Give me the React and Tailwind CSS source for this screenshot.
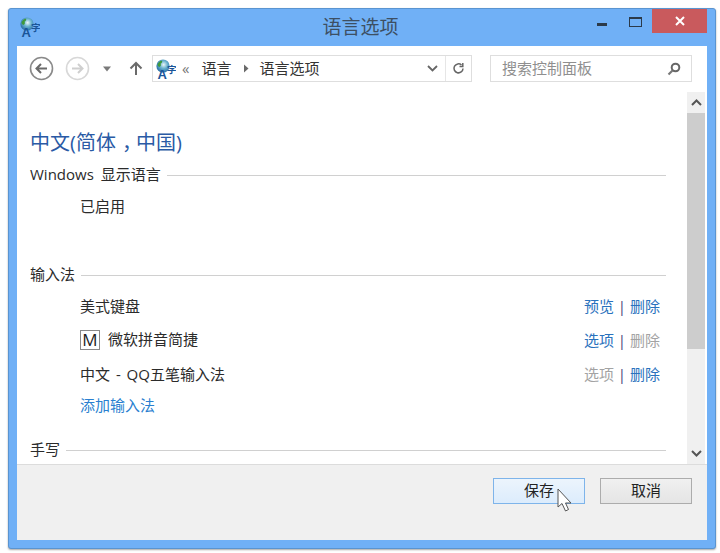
const FONT = '"Open Sans","Noto Sans CJK SC",sans-serif';

function Globe({ x = 0 }) {
  return (
    <svg width="20" height="24" viewBox="0 0 20 24" className="-mb-[4px] shrink-0">
      <defs>
        <radialGradient id={`g${x}`} cx="0.55" cy="0.4" r="0.7">
          <stop offset="0" stopColor="#eef7f8" />
          <stop offset="0.4" stopColor="#6cb4d0" />
          <stop offset="1" stopColor="#12589a" />
        </radialGradient>
      </defs>
      <circle cx="7" cy="7" r="6.6" fill={`url(#g${x})`} />
      <path d="M1.5 5.5c1-2.5 3-4 4.5-3.8 .6 1.4-.4 2.4-1.5 3 .8 1.2 .4 2.4-1 3.2-1.2-.5-2-1.2-2-2.4z" fill="#3f9a3a" />
      <text x="1.5" y="20" fontSize="13" fontWeight="700" fill="#1a5599" style={{ fontFamily: '"Liberation Sans",sans-serif' }}>A</text>
      <text x="11" y="14" fontSize="9.5" fontWeight="700" fill="#1a5599" style={{ fontFamily: '"Noto Sans CJK SC",sans-serif' }}>字</text>
    </svg>
  );
}

function Section({ label, className = "" }) {
  return (
    <div className={`flex h-[18px] items-center gap-[6px] text-[15px] leading-[18px] text-[#2b2b2b] ${className}`}>
      <span className="mb-[2px] whitespace-nowrap [word-spacing:3px]">{label}</span>
      <div className="h-px flex-1 bg-[#d0d0d0]" />
    </div>
  );
}

function Link({ children, off }) {
  return <span className={off ? "text-[#a3a3a3]" : "text-[#2a72bd]"}>{children}</span>;
}

function Row({ children, a, b, aOff, bOff, className = "" }) {
  return (
    <div className={`flex items-center justify-between pl-[50px] pr-[6px] text-[15px] leading-[20px] text-[#2b2b2b] ${className}`}>
      <div className="flex items-center">{children}</div>
      <div className="flex items-center">
        <Link off={aOff}>{a}</Link>
        <span className="w-[16px] text-center text-[#4a3f7a]">|</span>
        <Link off={bOff}>{b}</Link>
      </div>
    </div>
  );
}

export default function App() {
  return (
    <div className="h-[553px] w-[720px] overflow-hidden bg-white pl-2 pt-2" style={{ fontFamily: FONT }}>
      <div className="flex h-[541px] w-[708px] flex-col rounded-[3px] border border-[#5a94d0] bg-[#70b0f6] pb-[8px] pl-[8px] pr-[8px] shadow-[0_1px_2px_rgba(0,0,0,0.35)]">
        {/* title bar */}
        <div className="relative flex h-[37px] shrink-0 items-center">
          <div className="-mt-[2px] ml-[3px]"><Globe x={1} /></div>
          <div className="absolute left-0 right-0 top-[7px] pr-[3px] text-center text-[19px] leading-[22px] text-[#3d4f63]">语言选项</div>
          <div className="ml-auto flex h-full items-start self-start">
            <div className="mt-[14px] flex w-[33px] justify-start pl-[7px]">
              <div className="h-[3px] w-[10px] bg-[#2b3a4a]" />
            </div>
            <div className="mt-[8px] flex w-[24px] justify-center">
              <div className="h-[10px] w-[13px] border border-t-2 border-[#2b3a4a]" />
            </div>
            <div className="relative z-10 ml-[5px] flex h-[24px] w-[55px] items-center justify-center bg-[#c95a5d]">
              <svg width="12" height="12" viewBox="0 0 12 12"><path d="M2 2 L10 10 M10 2 L2 10" stroke="#fff" strokeWidth="2" /></svg>
            </div>
          </div>
        </div>

        {/* body */}
        <div className="flex min-h-0 flex-1 flex-col bg-white">
          {/* nav */}
          <div className="h-[46px] shrink-0 pl-[12px] pt-[9px]">
            <div className="flex h-[27px] items-center">
              <svg width="25" height="25" viewBox="0 0 25 25">
                <circle cx="12.5" cy="12.5" r="11" fill="none" stroke="#8a8a8a" strokeWidth="1.6" />
                <path d="M18 12.5H8 M12 8 L7.5 12.5 L12 17" fill="none" stroke="#6a6a6a" strokeWidth="2" />
              </svg>
              <svg width="25" height="25" viewBox="0 0 25 25" className="ml-[11px]">
                <circle cx="12.5" cy="12.5" r="11" fill="none" stroke="#d8d8d8" strokeWidth="1.6" />
                <path d="M7 12.5H17 M13 8 L17.5 12.5 L13 17" fill="none" stroke="#cfcfcf" strokeWidth="2" />
              </svg>
              <svg width="10" height="6" viewBox="0 0 10 6" className="ml-[12px]"><path d="M1 0.5H9L5 5.5Z" fill="#7a7a7a" /></svg>
              <svg width="14" height="15" viewBox="0 0 14 15" className="ml-[17px]"><path d="M7 14V2 M1.5 7.5 L7 2 L12.5 7.5" fill="none" stroke="#6a6a6a" strokeWidth="2" /></svg>
              <div className="ml-[9px] flex h-[27px] w-[320px] items-center border border-[#dedede]">
                <div className="ml-[3px]"><Globe x={2} /></div>
                <span className="ml-[6px] text-[15px] leading-none text-[#777]">«</span>
                <span className="ml-[12px] text-[15px] text-[#333]">语言</span>
                <svg width="6" height="9" viewBox="0 0 6 9" className="ml-[12px]"><path d="M1 0.5L5.5 4.5L1 8.5Z" fill="#6a6a6a" /></svg>
                <span className="ml-[10px] text-[15px] text-[#333]">语言选项</span>
                <svg width="11" height="7" viewBox="0 0 11 7" className="ml-auto"><path d="M1 1L5.5 5.5L10 1" fill="none" stroke="#666" strokeWidth="1.8" /></svg>
                <div className="ml-[7px] mr-[6px] flex h-full items-center border-l border-[#e6e6e6] pl-[6px]">
                  <svg width="13" height="13" viewBox="0 0 13 13"><path d="M11 6.5A4.5 4.5 0 1 1 9.5 3 M7.5 4.5 H10.8 V1" fill="none" stroke="#666" strokeWidth="1.5" /></svg>
                </div>
              </div>
              <div className="ml-[18px] flex h-[27px] w-[202px] items-center justify-between border border-[#dedede] pl-[11px] pr-[10px] text-[15px] text-[#8f8f8f]">
                <span>搜索控制面板</span>
                <svg width="14" height="14" viewBox="0 0 14 14"><circle cx="8.5" cy="5.5" r="3.8" fill="none" stroke="#666" strokeWidth="2" /><path d="M5.5 8.5L1.5 12.5" stroke="#777" strokeWidth="2.2" /></svg>
              </div>
            </div>
          </div>

          {/* content */}
          <div className="flex min-h-0 flex-1">
            <div className="min-w-0 flex-1 pl-[13px] pr-[21px]">
              <div className="mt-[38px] text-[20px] leading-[26px] text-[#2a5aa5]">
                中文(简体<span className="inline-block translate-x-[6px]">，</span>中国)
              </div>
              <Section label="Windows 显示语言" className="mt-[10px]" />
              <div className="mt-[12px] pl-[50px] text-[15px] leading-[20px] text-[#2b2b2b]">已启用</div>
              <Section label="输入法" className="mt-[50px]" />
              <Row a="预览" b="删除" className="mt-[12px]">美式键盘</Row>
              <Row a="选项" b="删除" bOff className="mt-[13px]">
                <span className="mr-[8px] flex h-[20px] w-[20px] items-center justify-center border border-[#8a8a8a] text-[17px] text-[#222]">M</span>
                <span className="mb-[2px]">微软拼音简捷</span>
              </Row>
              <Row a="选项" aOff b="删除" className="mt-[13px]">
                <span className="[word-spacing:2px]">中文 - QQ五笔输入法</span>
              </Row>
              <div className="mt-[11px] pl-[50px] text-[15px] leading-[20px] text-[#2a7fd0]">添加输入法</div>
              <Section label="手写" className="mt-[26px]" />
            </div>
            {/* scrollbar */}
            <div className="mr-[2px] flex w-[18px] shrink-0 flex-col bg-[#f0f0f0]">
              <div className="flex h-[21px] items-center justify-center">
                <svg width="11" height="7" viewBox="0 0 11 7"><path d="M1 6L5.5 1.5L10 6" fill="none" stroke="#555" strokeWidth="2" /></svg>
              </div>
              <div className="h-[236px] bg-[#cdcdcd]" />
              <div className="mt-auto flex h-[21px] items-center justify-center">
                <svg width="11" height="7" viewBox="0 0 11 7"><path d="M1 1L5.5 5.5L10 1" fill="none" stroke="#555" strokeWidth="2" /></svg>
              </div>
            </div>
          </div>

          {/* footer */}
          <div className="flex h-[76px] shrink-0 items-start justify-end border-t border-[#dcdcdc] bg-[#f0f0f0] pr-[15px] pt-[13px]">
            <div className="relative flex h-[26px] w-[92px] items-center justify-center border border-[#7eb4ea] bg-gradient-to-b from-[#ecf4fc] to-[#dcecfc] pb-[2px] text-[15px] text-[#222]">
              保存
              <svg width="16" height="24" viewBox="0 0 16 24" className="absolute left-[63px] top-[9px]">
                <path d="M1 1 L1 19 L5 15.5 L8.5 23 L11.5 21.5 L8.5 15 H14 Z" fill="#fff" stroke="#555" strokeWidth="1" strokeLinejoin="round" />
              </svg>
            </div>
            <div className="ml-[15px] flex h-[26px] w-[92px] items-center justify-center border border-[#acacac] bg-gradient-to-b from-[#f0f0f0] to-[#e5e5e5] pb-[2px] text-[15px] text-[#222]">取消</div>
          </div>
        </div>
      </div>
    </div>
  );
}
